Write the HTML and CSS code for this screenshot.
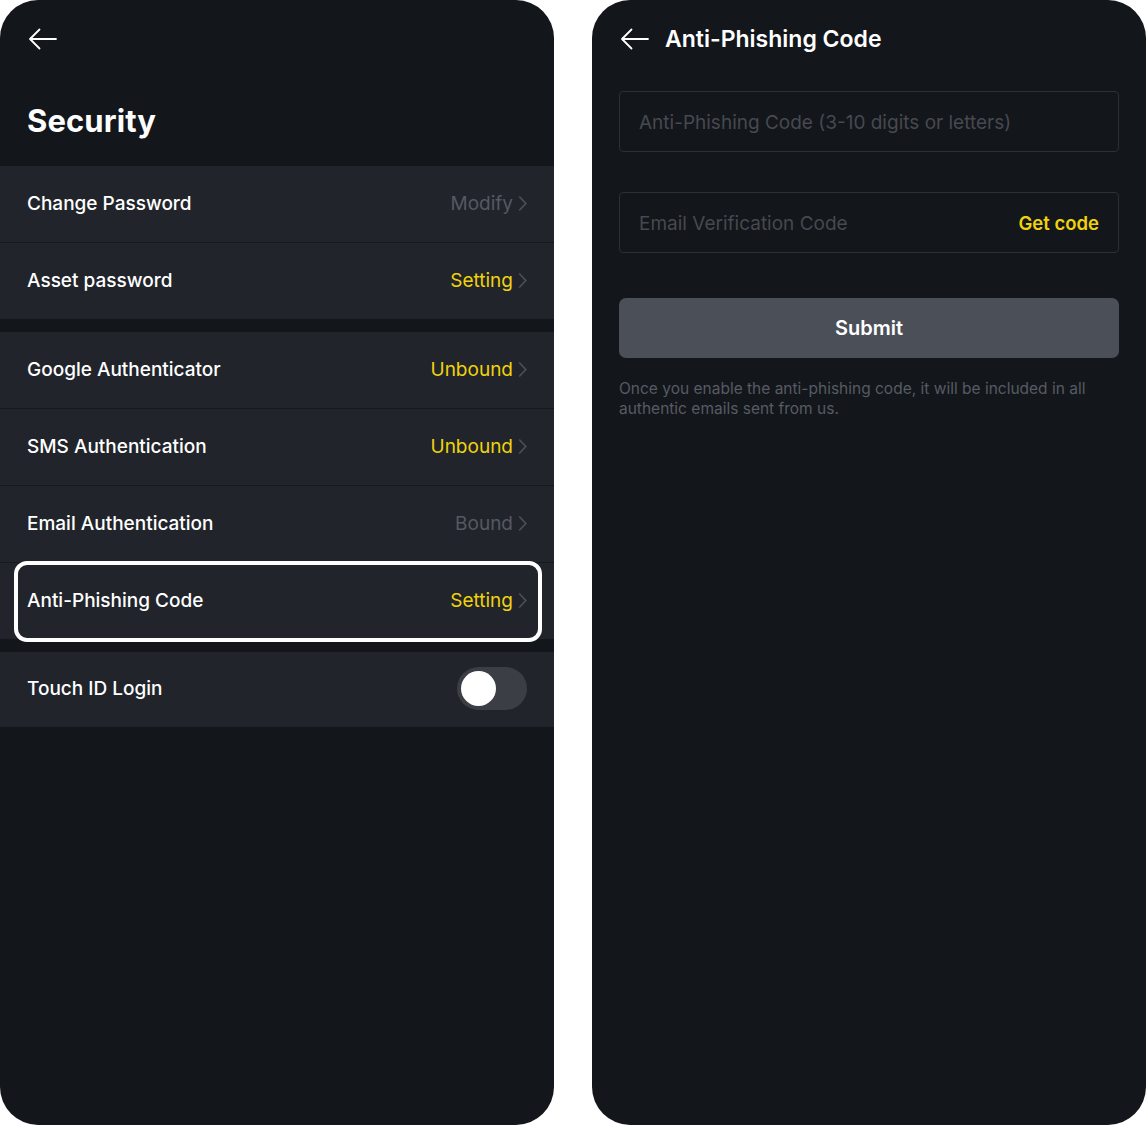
FILE: index.html
```html
<!DOCTYPE html>
<html lang="en">
<head>
    <meta charset="UTF-8">
    <meta name="viewport" content="width=device-width, initial-scale=1.0">
    <title>Security</title>
    <link rel="stylesheet" href="styles.css">
</head>
<body>
    <div class="screen">
        <div class="topbar">
            <svg class="back" width="30" height="22" viewBox="0 0 30 22"><path d="M28 11H2M11.5 1.5L2 11l9.5 9.5" fill="none" stroke="#fff" stroke-width="1.8" stroke-linecap="round" stroke-linejoin="round"/></svg>
        </div>
        <h1 class="page-title">Security</h1>

        <div class="group">
            <div class="row">
                <span class="label">Change Password</span>
                <span class="value muted">Modify</span>
                <svg class="chev" width="9" height="17" viewBox="0 0 9 17"><path d="M1.2 1.5l6.6 7-6.6 7" fill="none" stroke="#4a4e56" stroke-width="1.8"/></svg>
            </div>
            <div class="row">
                <span class="label">Asset password</span>
                <span class="value yellow">Setting</span>
                <svg class="chev" width="9" height="17" viewBox="0 0 9 17"><path d="M1.2 1.5l6.6 7-6.6 7" fill="none" stroke="#4a4e56" stroke-width="1.8"/></svg>
            </div>
        </div>

        <div class="group">
            <div class="row">
                <span class="label">Google Authenticator</span>
                <span class="value yellow">Unbound</span>
                <svg class="chev" width="9" height="17" viewBox="0 0 9 17"><path d="M1.2 1.5l6.6 7-6.6 7" fill="none" stroke="#4a4e56" stroke-width="1.8"/></svg>
            </div>
            <div class="row">
                <span class="label">SMS Authentication</span>
                <span class="value yellow">Unbound</span>
                <svg class="chev" width="9" height="17" viewBox="0 0 9 17"><path d="M1.2 1.5l6.6 7-6.6 7" fill="none" stroke="#4a4e56" stroke-width="1.8"/></svg>
            </div>
            <div class="row">
                <span class="label">Email Authentication</span>
                <span class="value muted">Bound</span>
                <svg class="chev" width="9" height="17" viewBox="0 0 9 17"><path d="M1.2 1.5l6.6 7-6.6 7" fill="none" stroke="#4a4e56" stroke-width="1.8"/></svg>
            </div>
            <div class="row highlighted">
                <span class="label">Anti-Phishing Code</span>
                <span class="value yellow">Setting</span>
                <svg class="chev" width="9" height="17" viewBox="0 0 9 17"><path d="M1.2 1.5l6.6 7-6.6 7" fill="none" stroke="#4a4e56" stroke-width="1.8"/></svg>
            </div>
        </div>

        <div class="group">
            <div class="row short">
                <span class="label">Touch ID Login</span>
                <div class="toggle"><div class="knob"></div></div>
            </div>
        </div>
    </div>

    <div class="screen">
        <div class="topbar">
            <svg class="back" width="30" height="22" viewBox="0 0 30 22"><path d="M28 11H2M11.5 1.5L2 11l9.5 9.5" fill="none" stroke="#fff" stroke-width="1.8" stroke-linecap="round" stroke-linejoin="round"/></svg>
            <h2 class="bar-title">Anti-Phishing Code</h2>
        </div>

        <form class="form">
            <div class="field">
                <input type="text" placeholder="Anti-Phishing Code (3-10 digits or letters)">
            </div>
            <div class="field">
                <input type="text" placeholder="Email Verification Code">
                <span class="get-code">Get code</span>
            </div>
            <button type="button" class="submit">Submit</button>
            <p class="hint">Once you enable the anti-phishing code, it will be included in all authentic emails sent from us.</p>
        </form>
    </div>
</body>
</html>
```

FILE: styles.css
```css
body {
    margin: 0;
    background: #fff;
    font-family: Inter, "Noto Sans", sans-serif;
    display: flex;
    gap: 38px;
    height: 1125px;
    overflow: hidden;
}
.screen {
    width: 554px;
    height: 1125px;
    background: #13161b;
    border-radius: 38px;
    overflow: hidden;
    color: #fff;
}
.topbar {
    height: 78px;
    display: flex;
    align-items: center;
    padding-left: 28px;
    padding-bottom: 1px;
    box-sizing: border-box;
}
.back {
    display: block;
}
.page-title {
    margin: 0;
    height: 88px;
    padding: 24px 0 0 27px;
    box-sizing: border-box;
    font-size: 31px;
    font-weight: 700;
    letter-spacing: 0.1px;
}
.group {
    margin-bottom: 13px;
}
.row {
    position: relative;
    height: 76px;
    background: #21242b;
    display: flex;
    align-items: center;
    padding: 0 27px;
    border-bottom: 1px solid #15181d;
}
.row:last-child {
    border-bottom: none;
}
.row.short {
    height: 75px;
}
.label {
    flex: 1;
    font-size: 19px;
    font-weight: 500;
    color: #fff;
    margin-top: -2px;
}
.value {
    font-size: 19px;
    margin-top: -2px;
}
.muted {
    color: #555961;
}
.yellow {
    color: #f0d30c;
}
.chev {
    display: block;
    margin-left: 5px;
    margin-right: 0;
    margin-top: -2px;
}
.highlighted::after {
    content: "";
    position: absolute;
    left: 14px;
    right: 12px;
    top: -2px;
    bottom: -3px;
    border: 4px solid #fff;
    border-radius: 13px;
}
.toggle {
    width: 70px;
    height: 43px;
    border-radius: 22px;
    background: #3b3e45;
    margin-right: 0;
    margin-top: -2px;
    display: flex;
    align-items: center;
    padding-left: 4px;
    box-sizing: border-box;
}
.knob {
    width: 35px;
    height: 35px;
    border-radius: 50%;
    background: #fff;
}
.bar-title {
    margin: 0 0 0 15px;
    font-size: 23px;
    font-weight: 600;
}
.form {
    padding: 13px 27px 0 27px;
}
.field {
    height: 61px;
    border: 1px solid #2c2f36;
    border-radius: 4px;
    display: flex;
    align-items: center;
    padding: 2px 19px 0 19px;
    margin-bottom: 40px;
    box-sizing: border-box;
}
.field input {
    flex: 1;
    background: transparent;
    border: none;
    outline: none;
    padding: 0;
    font-family: inherit;
    font-size: 19px;
    color: #fff;
}
.field input::placeholder {
    color: #464950;
}
.get-code {
    color: #f0d30c;
    font-size: 18.5px;
    font-weight: 600;
    margin-top: -2px;
}
.submit {
    display: block;
    width: 100%;
    height: 60px;
    margin-top: 45px;
    border: none;
    border-radius: 7px;
    background: #4b4f57;
    color: #fff;
    font-family: inherit;
    font-size: 20px;
    font-weight: 600;
    cursor: pointer;
}
.hint {
    margin: 21px 0 0;
    font-size: 15.5px;
    line-height: 20px;
    color: #575b63;
}
```
